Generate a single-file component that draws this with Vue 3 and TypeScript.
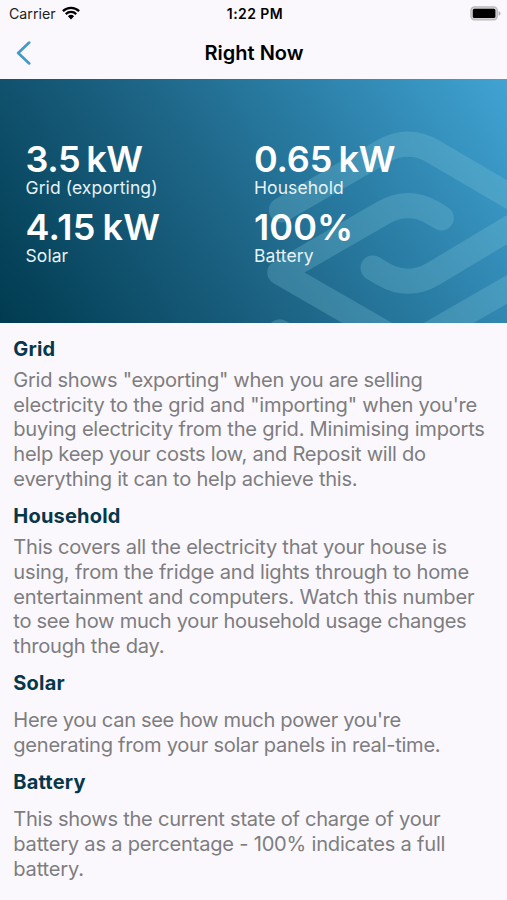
<script setup lang="ts">
interface Reading {
  value: string
  label: string
  tracking: number
}

interface Line {
  text: string
  tracking: number
}

interface Topic {
  title: string
  lines: Line[]
  spaced?: boolean
}

const readings: Reading[] = [
  { value: '3.5 kW', label: 'Grid (exporting)', tracking: -0.45 },
  { value: '0.65 kW', label: 'Household', tracking: -0.2 },
  { value: '4.15 kW', label: 'Solar', tracking: 0.3 },
  { value: '100%', label: 'Battery', tracking: 0.1 },
]

const topics: Topic[] = [
  {
    title: 'Grid',
    lines: [
      { text: 'Grid shows "exporting" when you are selling', tracking: -0.29 },
      { text: 'electricity to the grid and "importing" when you\'re', tracking: -0.23 },
      { text: 'buying electricity from the grid. Minimising imports', tracking: -0.23 },
      { text: 'help keep your costs low, and Reposit will do', tracking: -0.27 },
      { text: 'everything it can to help achieve this.', tracking: -0.24 },
    ],
  },
  {
    title: 'Household',
    lines: [
      { text: 'This covers all the electricity that your house is', tracking: -0.26 },
      { text: 'using, from the fridge and lights through to home', tracking: -0.2 },
      { text: 'entertainment and computers. Watch this number', tracking: -0.19 },
      { text: 'to see how much your household usage changes', tracking: -0.28 },
      { text: 'through the day.', tracking: -0.24 },
    ],
  },
  {
    title: 'Solar',
    spaced: true,
    lines: [
      { text: "Here you can see how much power you're", tracking: -0.35 },
      { text: 'generating from your solar panels in real-time.', tracking: -0.27 },
    ],
  },
  {
    title: 'Battery',
    spaced: true,
    lines: [
      { text: 'This shows the current state of charge of your', tracking: -0.27 },
      { text: 'battery as a percentage - 100% indicates a full', tracking: -0.22 },
      { text: 'battery.', tracking: -0.2 },
    ],
  },
]
</script>

<template>
  <div class="screen">
    <div class="status">
      <div class="carrier">
        <span>Carrier</span>
        <svg class="wifi" viewBox="0 0 18 14" width="18" height="14">
          <g fill="none" stroke="#000" stroke-width="2.3">
            <path d="M0.9 5.1A11.6 11.6 0 0 1 17.1 5.1" />
            <path d="M3.8 8.1A7.4 7.4 0 0 1 14.2 8.1" />
          </g>
          <path d="M5.9 10.2A4.5 4.5 0 0 1 12.1 10.2L9 13.4Z" />
        </svg>
      </div>
      <span class="time">1:22 PM</span>
      <svg class="battery" viewBox="0 0 31 15" width="31" height="15">
        <rect x="0.9" y="0.9" width="26.4" height="13" rx="3.6" fill="#d2d0d2" stroke="#b9b7b9" stroke-width="1.2" />
        <rect x="2.8" y="2.8" width="22.6" height="9.2" rx="1.6" fill="#000" />
        <path d="M28.6 5V9.8Q30.5 9 30.5 7.4T28.6 5Z" fill="#b0aeb0" />
      </svg>
    </div>

    <header class="nav">
      <svg class="back" viewBox="0 0 16 24" width="16" height="24">
        <path d="M13.2 1.6L2.2 12L13.2 22.4" fill="none" stroke="#4499c9" stroke-width="2.7" stroke-linecap="round" stroke-linejoin="round" />
      </svg>
      <h1>Right Now</h1>
    </header>

    <section class="hero">
      <svg class="mark" viewBox="0 0 507 244" width="507" height="244">
        <g fill="none" stroke="#80c8da" stroke-linecap="round" stroke-linejoin="round" stroke-opacity="0.27" stroke-width="25">
          <path d="M281.3 131L383 72.4Q408 58 433 72.4L536.3 133L433 195Q408 209.5 383 195L373 189M441.3 139L433 133.8Q408 119.4 383 133.8L279.7 193.5L383 253Q408 267.5 433 253L536.3 193.5M279.7 252.8L383 312" />
        </g>
      </svg>
      <div class="readings">
        <div v-for="r in readings" :key="r.label" class="reading">
          <div class="value" :style="{ letterSpacing: r.tracking + 'px' }">{{ r.value }}</div>
          <div class="label">{{ r.label }}</div>
        </div>
      </div>
    </section>

    <main class="topics">
      <section v-for="t in topics" :key="t.title" class="topic" :class="{ spaced: t.spaced }">
        <h2>{{ t.title }}</h2>
        <p>
          <span v-for="line in t.lines" :key="line.text" class="line" :style="{ letterSpacing: line.tracking + 'px' }">{{ line.text }}</span>
        </p>
      </section>
    </main>
  </div>
</template>

<style>
body {
  background: #faf8fc;
}
</style>

<style scoped>
.screen {
  width: 507px;
  height: 900px;
  overflow: hidden;
  background: #faf8fc;
  font-family: Inter, "Liberation Sans", sans-serif;
  color: #000;
}

.status {
  display: grid;
  grid-template-columns: 1fr auto 1fr;
  align-items: center;
  height: 27px;
  padding: 0 6px 0 9px;
  font-size: 14.2px;
}

.carrier {
  display: flex;
  align-items: center;
  gap: 6px;
  color: #222;
}

.wifi {
  margin-top: -2px;
}

.time {
  font-weight: 600;
  font-size: 14px;
  letter-spacing: 0.45px;
}

.battery {
  justify-self: end;
}

.nav {
  display: grid;
  grid-template-columns: 61px 1fr 60px;
  align-items: center;
  height: 52px;
}

.back {
  margin: -1px 0 0 16px;
}

h1 {
  margin: -1px 0 0;
  text-align: center;
  font-size: 20px;
  line-height: 24px;
  font-weight: 600;
}

.hero {
  display: grid;
  height: 244px;
  background: linear-gradient(56deg, #003b50 0%, #1c6283 42%, #2b7fa7 68%, #41a3d3 100%);
  color: #fff;
}

.mark,
.readings {
  grid-area: 1 / 1;
}

.readings {
  display: grid;
  grid-template-columns: 228.5px 1fr;
  grid-auto-rows: 67.5px;
  padding: 60px 0 0 25.5px;
}

.value {
  font-size: 36px;
  line-height: 40px;
  font-weight: 580;
  word-spacing: -2.5px;
}

.label {
  font-size: 17.5px;
  line-height: 17px;
  letter-spacing: 0.08px;
  color: #e6f2f7;
}

.topics {
  padding: 12.7px 0 0 13.3px;
}

.topic {
  margin-bottom: 11px;
}

h2 {
  margin: 0 0 6px;
  font-size: 20px;
  line-height: 26px;
  font-weight: 700;
  letter-spacing: 0.2px;
  color: #06374a;
}

p {
  margin: 0;
  font-size: 20.1px;
  line-height: 24.85px;
  color: #7e7d80;
}

.spaced h2 {
  margin-bottom: 12px;
}

.line {
  display: block;
  width: max-content;
}
</style>
